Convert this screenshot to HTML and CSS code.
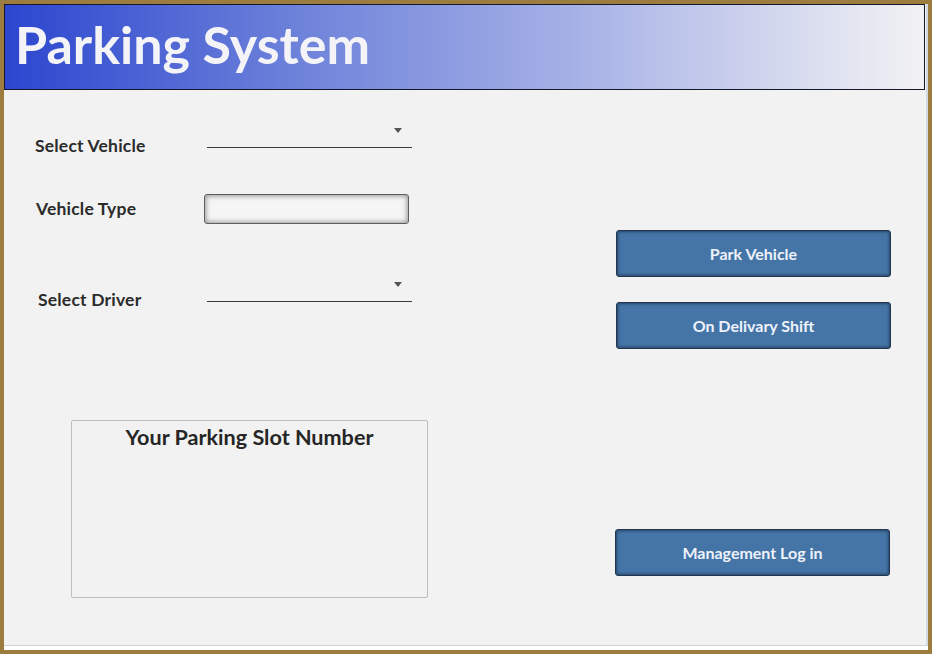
FILE: index.html
```html
<!DOCTYPE html>
<html lang="en">
<head>
<meta charset="utf-8">
<title>Parking System</title>
<link rel="stylesheet" href="styles.css">
</head>
<body>
<div class="frame">
  <div class="window">
    <div class="pane">
      <header class="titlebar"><h1 class="title">Parking System</h1></header>
      <main class="content">
        <section class="form">
          <div class="row row-vehicle">
            <label class="lbl">Select Vehicle</label>
            <div class="combo"><span class="arrow"></span></div>
          </div>
          <div class="row row-type">
            <label class="lbl">Vehicle Type</label>
            <div class="textbox"></div>
          </div>
          <div class="row row-driver">
            <label class="lbl">Select Driver</label>
            <div class="combo"><span class="arrow"></span></div>
          </div>
          <div class="slot">
            <h2 class="slot-title">Your Parking Slot Number</h2>
          </div>
        </section>
        <section class="actions">
          <button class="btn">Park Vehicle</button>
          <button class="btn btn-shift">On Delivary Shift</button>
          <button class="btn btn-login">Management Log in</button>
        </section>
      </main>
    </div>
  </div>
</div>
</body>
</html>
```
FILE: styles.css
```css
html, body {
  margin: 0;
  padding: 0;
}
body {
  width: 932px;
  height: 654px;
  overflow: hidden;
  background: #9d7c40;
  font-family: Lato, "Open Sans", "Liberation Sans", sans-serif;
}
.frame {
  padding: 4px;
}
.window {
  width: 924px;
  height: 646px;
  background: #ffffff;
}
.pane {
  width: 922px;
  height: 641px;
  background: #f2f2f2;
  border-right: 2px solid #d3d9e0;
  border-bottom: 1px solid #cfd3d6;
}
.titlebar {
  box-sizing: border-box;
  width: 921px;
  height: 86px;
  border: 1px solid #15172a;
  background: linear-gradient(to right, #2c46cf 0%, #6a7fd9 30%, #a6b1e6 62%, #f2f2f3 100%);
}
.title {
  margin: 0;
  padding-left: 10px;
  font-size: 52px;
  line-height: 78px;
  font-weight: 700;
  color: #f4f4f8;
}
.content {
  display: grid;
  grid-template-columns: 612px 275px;
}
.form {
  padding-top: 34px;
}
.row {
  display: flex;
  align-items: flex-start;
}
.lbl {
  font-size: 17.5px;
  letter-spacing: 0.2px;
  line-height: 20px;
  font-weight: 700;
  color: #2b2b2b;
  padding-top: 12px;
  flex: 0 0 auto;
}
.row-vehicle .lbl { margin-left: 31px; width: 172px; }
.row-type { margin-top: 38px; align-items: center; }
.row-type .lbl { margin-left: 32px; width: 168px; padding-top: 0; }
.row-driver { margin-top: 54px; }
.row-driver .lbl { margin-left: 34px; width: 169px; }
.combo {
  box-sizing: border-box;
  width: 205px;
  height: 24px;
  border-bottom: 1px solid #3a3a3a;
  display: flex;
  justify-content: flex-end;
  align-items: flex-start;
  padding: 4px 10px 0 0;
}
.arrow {
  width: 0;
  height: 0;
  border-top: 5px solid #555555;
  border-left: 4.5px solid transparent;
  border-right: 4.5px solid transparent;
}
.textbox {
  box-sizing: border-box;
  width: 205px;
  height: 30px;
  border: 1px solid #5e5e5e;
  border-radius: 3px;
  background: #f5f5f5;
  box-shadow: inset 0 0 5px 1px rgba(0, 0, 0, 0.4);
}
.slot {
  box-sizing: border-box;
  margin-top: 110px;
  margin-left: 67px;
  width: 357px;
  height: 178px;
  border: 1px solid #bdbdbd;
  border-radius: 2px;
  padding-top: 4px;
}
.slot-title {
  margin: 0;
  text-align: center;
  font-size: 21.6px;
  line-height: 24px;
  font-weight: 700;
  color: #262626;
}
.actions {
  display: flex;
  flex-direction: column;
  padding-top: 140px;
}
.btn {
  box-sizing: border-box;
  width: 275px;
  height: 47px;
  border: 1px solid #22364e;
  border-radius: 3px;
  background: #4575a7;
  box-shadow: inset 0 0 3px 1px rgba(12, 28, 50, 0.55);
  color: #eef2fa;
  font-family: Lato, "Open Sans", "Liberation Sans", sans-serif;
  font-size: 16px;
  font-weight: 700;
  padding: 0;
}
.btn-shift {
  margin-top: 25px;
}
.btn-login {
  margin-top: 180px;
  margin-left: -1px;
}
```
